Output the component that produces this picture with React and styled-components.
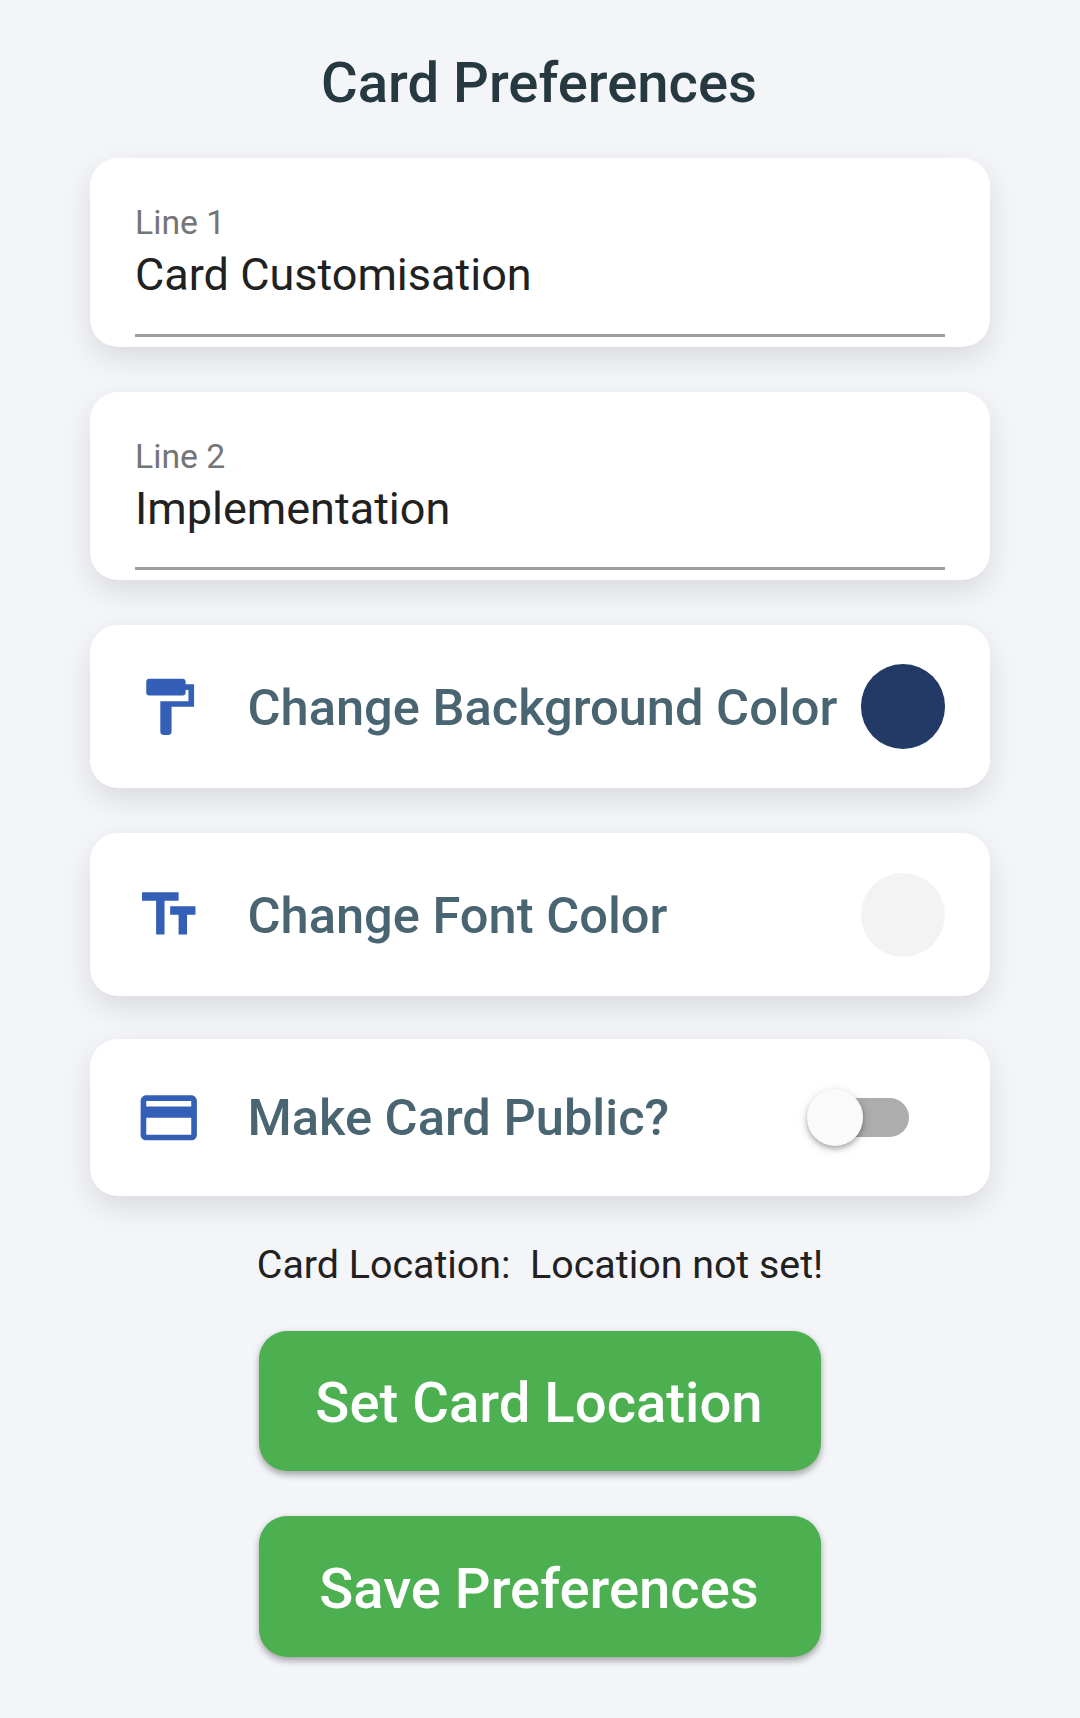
import React, { useState } from "react";
import styled, { createGlobalStyle } from "styled-components";

const GlobalStyle = createGlobalStyle`
  * { box-sizing: border-box; }
  html, body { margin: 0; padding: 0; background: #f3f5f9; }
  body { font-family: Roboto, "Liberation Sans", sans-serif; }
`;

const Screen = styled.main`
  display: flex;
  flex-direction: column;
  align-items: center;
  min-height: 1718px;
  padding: 50px 90px 15px;
  background: #f3f5f9;
`;

const Title = styled.h1`
  margin: 0 0 42.3px;
  padding-right: 2px;
  font-size: 56.25px;
  line-height: 66px;
  font-weight: 500;
  color: #263840;
`;

const Card = styled.section`
  width: 900px;
  height: ${(p) => p.$height}px;
  margin-bottom: ${(p) => p.$gap}px;
  border-radius: 28px;
  background: #fff;
  box-shadow: 0 11px 30px rgba(0, 0, 0, 0.11);
`;

const FieldCard = styled(Card)`
  display: flex;
  flex-direction: column;
  padding: 46px 45px 0;
`;

const FieldLabel = styled.label`
  font-size: 33.75px;
  line-height: 38.3px;
  color: #757575;
`;

const FieldInput = styled.input`
  width: 100%;
  height: 94.5px;
  padding: 6px 0 33px;
  border: 0;
  border-bottom: 3px solid #9e9e9e;
  outline: none;
  background: transparent;
  font-family: inherit;
  font-size: 45px;
  line-height: 52px;
  color: #212121;
`;

const RowCard = styled(Card)`
  display: flex;
  align-items: center;
  padding: 0 45px;
`;

const RowIcon = styled.svg`
  flex: none;
  width: 67.5px;
  height: 67.5px;
  margin: 0 45px 0 0;
  fill: #345fb6;
`;

const RowText = styled.span`
  flex: 1;
  padding-top: 2px;
  font-size: 50.625px;
  line-height: 60px;
  font-weight: 500;
  white-space: nowrap;
  color: #4a6572;
`;

const Swatch = styled.span`
  flex: none;
  width: 84.4px;
  height: 84.4px;
  border-radius: 50%;
  background: ${(p) => p.$color};
`;

const SwitchTrack = styled.button`
  display: flex;
  align-items: center;
  flex: none;
  width: 93px;
  height: 39.4px;
  margin-right: 36.5px;
  padding: 0;
  border: 0;
  border-radius: 20px;
  background: #adadad;
`;

const SwitchThumb = styled.span`
  flex: none;
  width: 56.25px;
  height: 56.25px;
  margin-left: ${(p) => (p.$on ? 46 : -8.5)}px;
  border-radius: 50%;
  background: #fafafa;
  box-shadow: 0 3px 5px rgba(0, 0, 0, 0.26), 0 2.8px 12px rgba(0, 0, 0, 0.12);
`;

const Location = styled.p`
  margin: 1px 0 42.5px;
  font-size: 39.375px;
  line-height: 46px;
  white-space: pre;
  color: #212121;
`;

const ActionButton = styled.button`
  width: 562.5px;
  height: 140.6px;
  margin: 0 0 45px;
  padding: 5px 2px 0 0;
  border: 0;
  border-radius: 28px;
  background: #4caf50;
  box-shadow: 0 4px 6px rgba(0, 0, 0, 0.25), 0 2.8px 10px rgba(0, 0, 0, 0.1);
  font-family: inherit;
  font-size: 56.25px;
  line-height: 66px;
  font-weight: 500;
  white-space: nowrap;
  color: #fff;
`;

const PAINT =
  "M18 4V3c0-.55-.45-1-1-1H5c-.55 0-1 .45-1 1v4c0 .55.45 1 1 1h12c.55 0 1-.45 1-1V6h1v4H9v11c0 .55.45 1 1 1h2c.55 0 1-.45 1-1v-9h8V4h-3z";
const SIZE = "M2.5 4v3h5v12h3V7h5V4h-13zm19 5h-9v3h3v7h3v-7h3V9z";
const CARD =
  "M20 4H4c-1.11 0-1.99.89-1.99 2L2 18c0 1.11.89 2 2 2h16c1.11 0 2-.89 2-2V6c0-1.11-.89-2-2-2zm0 14H4v-6h16v6zm0-10H4V6h16v2z";

function Icon({ path }) {
  return (
    <RowIcon viewBox="0 0 24 24" aria-hidden="true">
      <path d={path} />
    </RowIcon>
  );
}

function TextField({ id, label, initial, gap }) {
  const [value, setValue] = useState(initial);
  return (
    <FieldCard $height={188.4} $gap={gap}>
      <FieldLabel htmlFor={id}>{label}</FieldLabel>
      <FieldInput id={id} value={value} spellCheck={false} onChange={(e) => setValue(e.target.value)} />
    </FieldCard>
  );
}

export default function App() {
  const [isPublic, setPublic] = useState(false);
  return (
    <>
      <GlobalStyle />
      <Screen>
        <Title>Card Preferences</Title>
        <TextField id="line1" label="Line 1" initial="Card Customisation" gap={45} />
        <TextField id="line2" label="Line 2" initial="Implementation" gap={45} />
        <RowCard $height={163.1} $gap={45}>
          <Icon path={PAINT} />
          <RowText>Change Background Color</RowText>
          <Swatch $color="#233a66" />
        </RowCard>
        <RowCard $height={163.1} $gap={42.4}>
          <Icon path={SIZE} />
          <RowText>Change Font Color</RowText>
          <Swatch $color="#f3f3f3" />
        </RowCard>
        <RowCard $height={157.5} $gap={45}>
          <Icon path={CARD} />
          <RowText>Make Card Public?</RowText>
          <SwitchTrack role="switch" aria-checked={isPublic} onClick={() => setPublic(!isPublic)}>
            <SwitchThumb $on={isPublic} />
          </SwitchTrack>
        </RowCard>
        <Location>{"Card Location:  Location not set!"}</Location>
        <ActionButton>Set Card Location</ActionButton>
        <ActionButton>Save Preferences</ActionButton>
      </Screen>
    </>
  );
}
